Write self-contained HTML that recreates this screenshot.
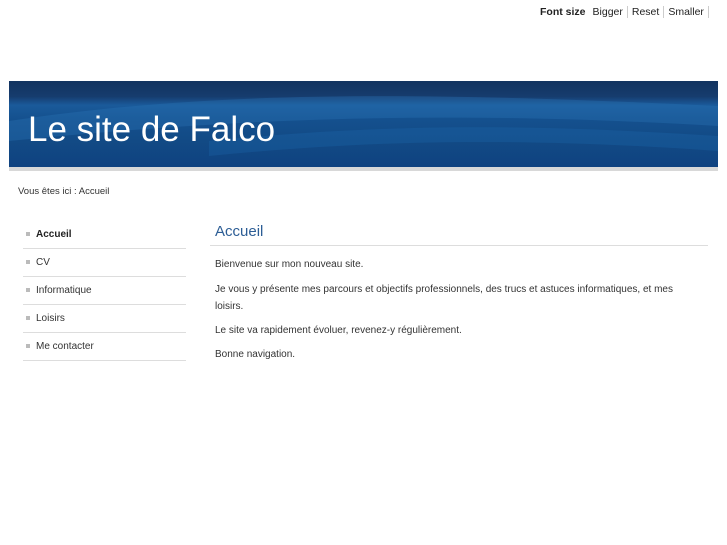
<!DOCTYPE html>
<html><head><style>
body{margin:0;background:#fff;font-family:"Liberation Sans",sans-serif;color:#222;width:727px;height:545px;overflow:hidden;position:relative}
.fs{position:absolute;top:6px;left:540px;font-size:10.5px;white-space:nowrap}
.fs b{margin-right:3px}
.fs span{padding:0 4px;border-right:1px solid #ccc}
.ban{position:absolute;left:9px;top:81px;width:709px;height:86px;overflow:hidden;
background:linear-gradient(180deg,#12335f 0%,#163c6e 18%,#1a5a9a 28%,#14508e 45%,#124a85 70%,#0f4280 100%)}
.ban h1{position:absolute;left:19px;top:29px;margin:0;font-weight:normal;font-size:35px;color:#fff}
.bar{position:absolute;left:9px;top:167px;width:709px;height:4px;background:#d8d8d8}
.bc{position:absolute;left:18px;top:186px;font-size:9.5px;color:#333}
.nav{position:absolute;left:23px;top:221px;width:163px}
.nav div{height:27px;border-bottom:1px solid #ddd;font-size:10px;line-height:27px;padding-left:3px;color:#333}
.nav div:before{content:"";display:inline-block;width:4px;height:4px;background:#bbb;margin-right:6px;vertical-align:middle}
.main{position:absolute;left:210px;top:223px;width:498px}
.main h2{margin:0;font-weight:normal;font-size:15px;color:#2c5d95;padding:0 0 5px 5px;border-bottom:1px solid #ddd}
.main p{margin:0 0 0 5px;font-size:10px;line-height:17px;color:#333;width:470px}
</style></head><body>
<div class="fs"><b>Font size</b><span>Bigger</span><span>Reset</span><span>Smaller</span></div>
<div class="ban">
<svg width="709" height="86" style="position:absolute;left:0;top:0">
<path d="M0 40 C200 10 400 10 709 25 L709 45 C450 30 250 35 0 60Z" fill="#2a75b8" opacity=".35"/>
<path d="M200 60 C400 40 550 45 709 55 L709 70 C500 55 350 60 200 75Z" fill="#1e6aae" opacity=".3"/>
</svg>
<h1>Le site de Falco</h1></div>
<div class="bar"></div>
<div class="bc">Vous êtes ici : Accueil</div>
<div class="nav">
<div style="font-weight:bold;color:#222">Accueil</div><div>CV</div><div>Informatique</div><div>Loisirs</div><div>Me contacter</div>
</div>
<div class="main">
<h2>Accueil</h2>
<p style="margin-top:10px">Bienvenue sur mon nouveau site.</p>
<p style="margin-top:8px">Je vous y présente mes parcours et objectifs professionnels, des trucs et astuces informatiques, et mes loisirs.</p>
<p style="margin-top:7px">Le site va rapidement évoluer, revenez-y régulièrement.</p>
<p style="margin-top:7px">Bonne navigation.</p>
</div>
</body></html>
